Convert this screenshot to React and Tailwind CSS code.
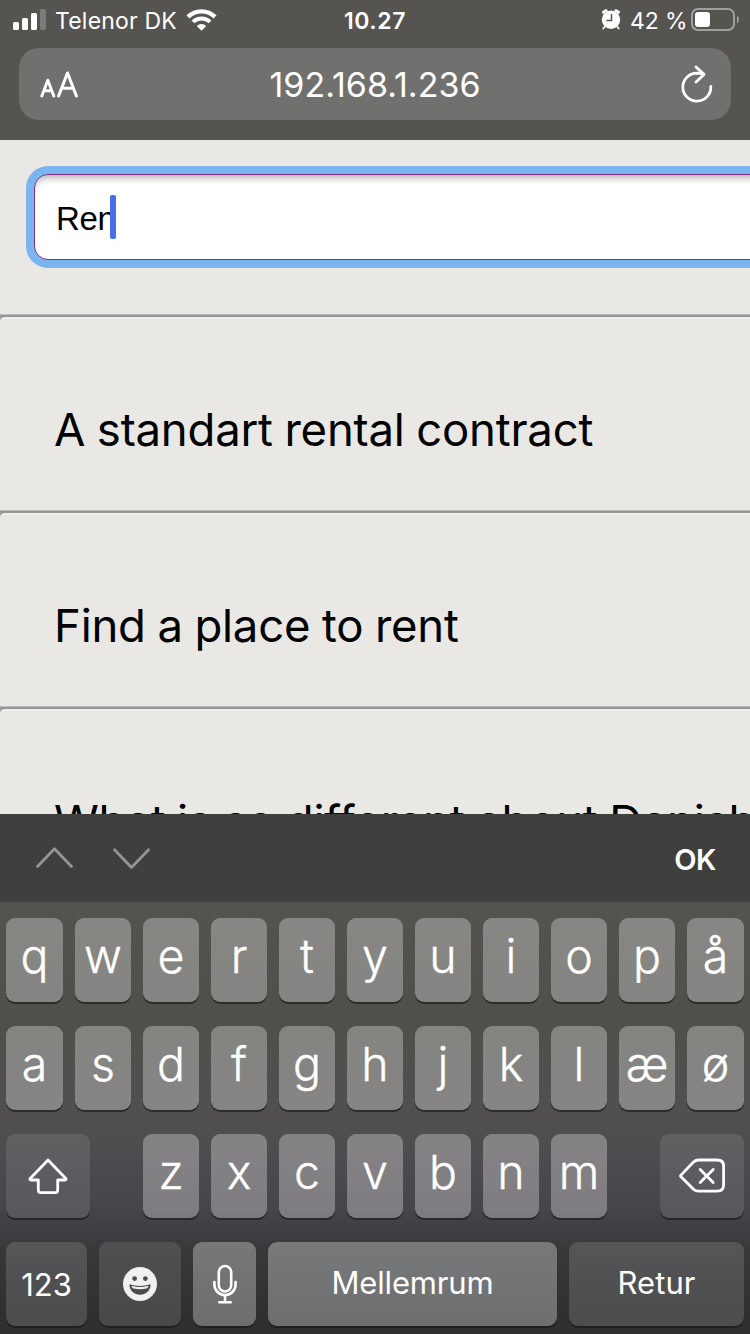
import React from "react";

const TOP_ROW = ["q", "w", "e", "r", "t", "y", "u", "i", "o", "p", "å"];
const MIDDLE_ROW = ["a", "s", "d", "f", "g", "h", "j", "k", "l", "æ", "ø"];
const BOTTOM_ROW = ["z", "x", "c", "v", "b", "n", "m"];

function StatusBar() {
  return (
    <div className="flex h-12 w-full items-start text-[23px] leading-[42px]">
      <div className="flex w-[260px] items-start pl-[13px]">
        <svg className="mt-[9px] h-[21px] w-[33px]" viewBox="0 0 33 21" fill="#fff">
          <rect x="0" y="13" width="6" height="8" rx="1.6" />
          <rect x="9" y="9" width="6" height="12" rx="1.6" />
          <rect x="18" y="4" width="6" height="17" rx="1.6" />
          <rect x="27" y="0" width="6" height="21" rx="1.6" fill="#7c7b79" />
        </svg>
        <span className="ml-[9px] w-[123px] whitespace-nowrap tracking-[0.2px]">Telenor DK</span>
        <svg className="ml-2 mt-[9px] h-[22px] w-[31px]" viewBox="0 0 31 22" fill="none">
          <path d="M2 7.8 A19.4 19.4 0 0 1 29 7.8" stroke="#fff" strokeWidth="4.4" />
          <path d="M7 12.9 A12.3 12.3 0 0 1 24 12.9" stroke="#fff" strokeWidth="4" />
          <path d="M10.8 17 A6.7 6.7 0 0 1 20.2 17 L15.5 21.8 Z" fill="#fff" />
        </svg>
      </div>
      <div className="w-[230px] text-center font-semibold tracking-[0.6px]">10.27</div>
      <div className="flex flex-1 items-start">
        <svg className="ml-[111px] mt-[9px] h-[21px] w-5" viewBox="0 0 20 21">
          <g fill="none" stroke="#fff" strokeWidth="2.8" strokeLinecap="round">
            <path d="M2.4 3.4 Q3.2 2.2 5.2 1.7" />
            <path d="M17.6 3.4 Q16.8 2.2 14.8 1.7" />
          </g>
          <path d="M4.5 17 L2.2 19.5 M15.5 17 L17.8 19.5" stroke="#fff" strokeWidth="1.7" strokeLinecap="round" />
          <circle cx="10" cy="10.8" r="9.2" fill="#fff" />
          <path d="M10.5 5 V11.5 H5.5" fill="none" stroke="#555451" strokeWidth="1.5" />
        </svg>
        <span className="ml-[9px] w-[59px] whitespace-nowrap tracking-[-0.1px]">42 %</span>
        <svg className="ml-[2px] mt-2 h-[23px] w-12" viewBox="0 0 48 23">
          <rect x="1" y="1" width="42" height="21" rx="6" fill="none" stroke="#a09f9d" strokeWidth="2" />
          <rect x="4" y="4" width="15" height="15" rx="3" fill="#fff" />
          <path d="M46 7.5 Q48 9 48 11.5 Q48 14 46 15.5 Z" fill="#a09f9d" />
        </svg>
      </div>
    </div>
  );
}

function AddressBar() {
  return (
    <div className="mx-[19px] flex h-[72px] items-center rounded-[20px] bg-[#70706e]">
      <div className="flex w-[112px] pl-[21px]">
        <svg className="mt-[1px] h-[27px] w-[38px]" viewBox="0 0 38 27" fill="none" stroke="#fff" strokeLinecap="round" strokeLinejoin="round">
          <path strokeWidth="2.9" d="M1.8 25 L7.8 9.2 L13.8 25 M4.2 19.8 H11.4" />
          <path strokeWidth="3" d="M18.6 25 L27.5 2 L36.4 25 M21.8 17.2 H33.2" />
        </svg>
      </div>
      <div className="flex-1 pt-[1px] text-center text-[34px] leading-[71px]">192.168.1.236</div>
      <div className="flex w-[112px] justify-end pr-[18px]">
        <svg className="h-[38px] w-8" viewBox="0 0 32 38" fill="none" stroke="#fff" strokeWidth="2.8" strokeLinecap="round" strokeLinejoin="round">
          <path d="M29.8 21.5 A14 14 0 1 1 15.8 8.2 L22.5 8.8" />
          <path d="M15 2 L23 9.4 L15 17" />
        </svg>
      </div>
    </div>
  );
}

function Result({ children }) {
  return (
    <div className="h-[196px] w-full shrink-0 bg-[#a5a3a2]">
      <div className="h-[3px] w-full border-t border-[#bcbbb9] bg-[#999796]" />
      <div className="flex h-[193px] items-center rounded-tl-[5px] border-t-2 border-[#eeeeec] bg-[#e9e8e4] pl-[54px] text-[45.5px] text-black">
        <span className="mt-[31px] whitespace-nowrap tracking-[-0.22px] [word-spacing:-0.9px]">{children}</span>
      </div>
    </div>
  );
}

function Page() {
  return (
    <div className="flex h-[674px] flex-col overflow-hidden bg-[#e9e8e4] text-black">
      <div className="h-[174px] shrink-0 pl-[26px] pt-[26px]">
        <div className="h-[102px] w-[800px] rounded-[22px] bg-[#7ab5f0] p-2">
          <div className="flex h-[86px] items-center rounded-[14px] border border-[#872d83] bg-white pl-[21px] font-['Liberation_Sans',Arial,sans-serif] text-[33px] shadow-[inset_0_8px_7px_-5px_rgba(0,0,0,0.3)]">
            <span className="w-[54px] whitespace-nowrap pt-[3px] tracking-[-0.4px]">Ren</span>
            <span className="h-11 w-[6px] rounded-[2px] bg-[#476cec]" />
          </div>
        </div>
      </div>
      <Result>A standart rental contract</Result>
      <Result>Find a place to rent</Result>
      <Result>What is so different about Danish</Result>
    </div>
  );
}

function Toolbar() {
  return (
    <div className="flex h-[88px] items-center bg-[#3f3f3e]">
      <svg className="ml-9 h-[22px] w-[37px]" viewBox="0 0 37 22" fill="none" stroke="#949493" strokeWidth="2.8" strokeLinecap="round" strokeLinejoin="round">
        <path d="M1.5 19.5 L18.5 1.7 L35.5 19.5" />
      </svg>
      <svg className="ml-10 h-[22px] w-[37px]" viewBox="0 0 37 22" fill="none" stroke="#949493" strokeWidth="2.8" strokeLinecap="round" strokeLinejoin="round">
        <path d="M1.5 2.7 L18.5 20.5 L35.5 2.7" />
      </svg>
      <span className="ml-auto mr-[34px] pt-[3px] text-[29px] font-semibold leading-none tracking-[-0.5px]">OK</span>
    </div>
  );
}

function Key({ className, children }) {
  return (
    <div className={"flex h-[84px] shrink-0 items-center justify-center rounded-[9px] shadow-[0_2px_0_rgba(25,25,27,0.65)] " + className}>
      {children}
    </div>
  );
}

function LetterRow({ letters }) {
  return (
    <div className="flex gap-3">
      {letters.map((letter) => (
        <Key key={letter} className={(letters.length === 11 ? "first:w-[57px] last:w-[57px] " : "") + "w-14 bg-white/30 pb-[7px] text-[46.5px] font-light leading-none [-webkit-text-stroke:0.35px_white]"}>
          {letter}
        </Key>
      ))}
    </div>
  );
}

function Keyboard() {
  return (
    <div className="flex h-[432px] flex-col gap-6 bg-[linear-gradient(180deg,#545350_0%,#4f4f4b_29%,#52504f_46%,#4e4b50_60%,#47454a_71%,#38373a_81%,#303032_95%,#302f31_100%)] px-[6px] pt-4">
      <LetterRow letters={TOP_ROW} />
      <LetterRow letters={MIDDLE_ROW} />
      <div className="flex justify-between">
        <Key className="w-[84px] bg-white/10">
          <svg className="h-9 w-10" viewBox="0 0 40 36" fill="none" stroke="#fff" strokeWidth="2.8" strokeLinejoin="round">
            <path d="M20 2 L38 20.8 Q38.5 22 37 22 H29.7 V32 Q29.7 34.6 27.2 34.6 H12.8 Q10.3 34.6 10.3 32 V22 H3 Q1.5 22 2 20.8 Z" />
          </svg>
        </Key>
        <LetterRow letters={BOTTOM_ROW} />
        <Key className="w-[84px] bg-white/10">
          <svg className="h-9 w-[46px]" viewBox="0 0 46 36" fill="none" stroke="#fff" strokeWidth="2.8" strokeLinecap="round" strokeLinejoin="round">
            <path d="M2 17.1 L14.5 4 Q16.8 2 19.5 2 H38 Q44.6 2 44.6 8 V27 Q44.6 33.2 38 33.2 H19.5 Q16.8 33.2 14.5 31.2 L2 18.8 Q1 18 2 17.1 Z" />
            <path d="M21.2 11.4 L34.2 24.6 M34.2 11.4 L21.2 24.6" />
          </svg>
        </Key>
      </div>
      <div className="flex gap-3">
        <Key className="w-[81px] bg-white/14 pt-[2px] text-[31px]">123</Key>
        <Key className="w-[82px] bg-linear-to-b from-[#505051] to-[#484847]">
          <svg className="h-[34px] w-[34px]" viewBox="0 0 34 34">
            <circle cx="17" cy="17" r="17" fill="#f0f0ef" />
            <circle cx="11.6" cy="11.6" r="2.4" fill="#4b4b4a" />
            <circle cx="22.4" cy="11.6" r="2.4" fill="#4b4b4a" />
            <path d="M6.6 17.3 Q17 20.5 27.4 17.3 C28.2 22.5 23.5 27.8 17 27.8 C10.5 27.8 5.8 22.5 6.6 17.3 Z" fill="#4b4b4a" />
            <path d="M8.6 18.8 Q17 21.4 25.4 18.8 Q25.2 20.3 24.4 21.3 Q17 23.2 9.6 21.3 Q8.8 20.3 8.6 18.8 Z" fill="#f0f0ef" />
          </svg>
        </Key>
        <Key className="w-[63px] bg-linear-to-b from-[#777879] to-[#6c6d6d]">
          <svg className="h-10 w-6" viewBox="0 0 24 40" fill="none" stroke="#fff" strokeWidth="2.6" strokeLinecap="round">
            <rect x="5.8" y="2" width="12.4" height="25.5" rx="6.2" />
            <path d="M1.4 18 V20.5 A10.6 10.6 0 0 0 22.6 20.5 V18 M12 31.2 V38 M6.3 38.3 H17.7" />
          </svg>
        </Key>
        <Key className="w-[289px] bg-linear-to-b from-[#78797b] to-[#6d6e70] pb-[2px] text-[31px] tracking-[-0.15px]">Mellemrum</Key>
        <Key className="w-[175px] bg-white/14 pb-[2px] text-[31px] tracking-[0.1px]">Retur</Key>
      </div>
    </div>
  );
}

export default function App() {
  return (
    <main className="h-[1334px] w-[750px] overflow-hidden bg-[#555451] font-['Inter',sans-serif] text-white">
      <header className="h-[140px]">
        <StatusBar />
        <AddressBar />
      </header>
      <Page />
      <Toolbar />
      <Keyboard />
    </main>
  );
}
